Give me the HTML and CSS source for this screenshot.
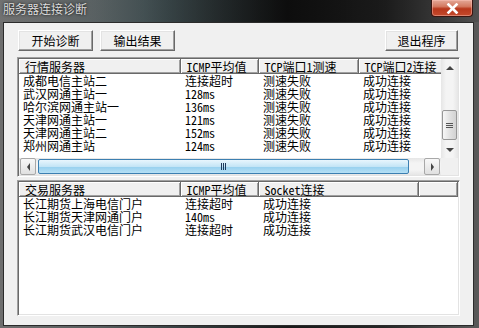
FILE: index.html
```html
<!DOCTYPE html>
<html lang="zh-CN">
<head>
  <meta charset="UTF-8">
  <title>服务器连接诊断</title>
  <link rel="stylesheet" href="styles.css">
</head>
<body>

  <div class="window">
    <div class="titlebar">
      <span class="title">服务器连接诊断</span>
      <span class="close">
        <svg width="13" height="11" viewBox="0 0 13 11"><path d="M2.5 1.5 L10.5 9.5 M10.5 1.5 L2.5 9.5" stroke="#fff" stroke-width="2.6" stroke-linecap="square"/></svg>
      </span>
    </div>

    <div class="client">
      <div class="toolbar">
        <button type="button" class="btn">开始诊断</button>
        <button type="button" class="btn">输出结果</button>
        <button type="button" class="btn btn-exit">退出程序</button>
      </div>

      <!-- quote servers -->
      <div class="listview lv-quote">
        <div class="lv-body">
          <table class="grid">
            <colgroup>
              <col style="width:161px"><col style="width:78px"><col style="width:100px"><col style="width:100px">
            </colgroup>
            <thead>
              <tr><th>行情服务器</th><th>ICMP平均值</th><th>TCP端口1测速</th><th>TCP端口2连接</th></tr>
            </thead>
            <tbody>
              <tr><td>成都电信主站二</td><td>连接超时</td><td>测速失败</td><td>成功连接</td></tr>
              <tr><td>武汉网通主站一</td><td>128ms</td><td>测速失败</td><td>成功连接</td></tr>
              <tr><td>哈尔滨网通主站一</td><td>136ms</td><td>测速失败</td><td>成功连接</td></tr>
              <tr><td>天津网通主站一</td><td>121ms</td><td>测速失败</td><td>成功连接</td></tr>
              <tr><td>天津网通主站二</td><td>152ms</td><td>测速失败</td><td>成功连接</td></tr>
              <tr><td>郑州网通主站</td><td>124ms</td><td>测速失败</td><td>成功连接</td></tr>
            </tbody>
          </table>
        </div>

        <div class="vscroll">
          <div class="sb-btn"><span class="arrow arrow-up"></span></div>
          <div class="sb-track">
            <div class="vthumb"><span class="grip-h"></span></div>
          </div>
          <div class="sb-btn"><span class="arrow arrow-down"></span></div>
        </div>

        <div class="hscroll">
          <div class="sb-btn sb-btn-box"><span class="arrow arrow-left"></span></div>
          <div class="sb-track">
            <div class="hthumb"><span class="grip-v"></span></div>
          </div>
          <div class="sb-btn sb-btn-box"><span class="arrow arrow-right"></span></div>
        </div>
        <div class="corner"></div>
      </div>

      <!-- trade servers -->
      <div class="listview lv-trade">
        <div class="lv-body">
          <table class="grid">
            <colgroup>
              <col style="width:161px"><col style="width:78px"><col style="width:160px"><col>
            </colgroup>
            <thead>
              <tr><th>交易服务器</th><th>ICMP平均值</th><th>Socket连接</th><th></th></tr>
            </thead>
            <tbody>
              <tr><td>长江期货上海电信门户</td><td>连接超时</td><td>成功连接</td><td></td></tr>
              <tr><td>长江期货天津网通门户</td><td>140ms</td><td>成功连接</td><td></td></tr>
              <tr><td>长江期货武汉电信门户</td><td>连接超时</td><td>成功连接</td><td></td></tr>
            </tbody>
          </table>
        </div>
      </div>
    </div>
  </div>

</body>
</html>
```

FILE: styles.css
```css
body {
  margin: 0;
  background: #fff;
  font-family: "Noto Sans Mono CJK SC", "Noto Sans CJK SC", sans-serif;
  font-size: 12px;
}
.window {
  width: 479px;
  height: 328px;
  box-sizing: border-box;
  padding: 0 5px 2px 3px;
  display: flex;
  flex-direction: column;
  background: linear-gradient(to right, #6e6e6e 0%, #5a5e5f 20%, #3c4446 35%, #1a1a1a 60%, #262626 80%, #5a5a5a 100%);
}
.titlebar {
  height: 22px;
  flex: none;
  display: flex;
  justify-content: space-between;
  align-items: flex-start;
  background: linear-gradient(to right, rgba(120,120,120,0.35), rgba(60,90,95,0.25) 30%, rgba(0,0,0,0.5) 60%, rgba(0,0,0,0.1));
  margin: 0 -5px 0 -3px;
}
.title {
  color: #dcdcdc;
  margin: 2px 0 0 3px;
  line-height: 14px;
  text-shadow: 0 0 3px #000;
}
.close {
  width: 42px;
  height: 17px;
  margin-right: 6px;
  box-sizing: border-box;
  display: flex;
  align-items: center;
  justify-content: center;
  border: 1px solid #3a1510;
  border-top: none;
  border-radius: 0 0 4px 4px;
  background: linear-gradient(#e4a898 0%, #d47a62 40%, #b8371c 55%, #c44a2c 100%);
  box-shadow: inset 0 0 0 1px rgba(255,200,190,0.45);
}
.client {
  flex: 1;
  border: 1px solid #2b2b2b;
  background: #f0f0f0;
  display: flex;
  flex-direction: column;
  padding: 7px 13px 9px 13px;
}
.toolbar {
  display: flex;
  gap: 7px;
  padding: 0 2px 0 1px;
  margin-bottom: 6px;
}
.btn {
  width: 75px;
  height: 21px;
  padding: 0;
  font: inherit;
  color: #000;
  background: #f0f0f0;
  border: 1px solid;
  border-color: #fff #696969 #696969 #fff;
  box-shadow: inset -1px -1px #a0a0a0, inset 1px 1px #e3e3e3;
}
.btn-exit {
  width: 73px;
  margin-left: auto;
}
.listview {
  border: 1px solid;
  border-color: #a0a0a0 #fff #fff #a0a0a0;
  box-shadow: inset 1px 1px #696969, inset -1px -1px #e3e3e3;
  padding: 1px;
  background: #fff;
  overflow: hidden;
}
.lv-quote {
  height: 120px;
  box-sizing: border-box;
  display: grid;
  grid-template-columns: 1fr 17px;
  grid-template-rows: 1fr 17px;
  margin-bottom: 3px;
}
.lv-trade {
  flex: 1;
}
.lv-body {
  overflow: hidden;
  background: #fff;
}
.lv-trade .lv-body {
  padding-bottom: 4px;
}
.grid {
  border-collapse: collapse;
  table-layout: fixed;
  width: 439px;
  line-height: 13px;
}
.lv-trade .grid {
  width: 100%;
}
.grid th {
  height: 14px;
  padding: 0 0 0 6px;
  font-weight: normal;
  text-align: left;
  white-space: nowrap;
  overflow: hidden;
  background: #f0f0f0;
  border-right: 1px solid #696969;
  border-bottom: 1px solid #696969;
  box-shadow: inset 1px 1px #fff, inset -1px -1px #a0a0a0;
}
.grid td {
  height: 13px;
  padding: 0 0 0 5px;
  white-space: nowrap;
}
.grid td:first-child {
  padding-left: 4px;
}
.vscroll, .hscroll {
  display: flex;
  background: linear-gradient(to right, #e6e6e6, #f4f4f4 30%, #f4f4f4 70%, #e6e6e6);
}
.vscroll {
  flex-direction: column;
}
.hscroll {
  background: linear-gradient(#e6e6e6, #f4f4f4 30%, #f4f4f4 70%, #e6e6e6);
}
.sb-btn {
  width: 17px;
  height: 17px;
  flex: none;
  display: flex;
  align-items: center;
  justify-content: center;
  box-sizing: border-box;
}
.sb-btn-box {
  width: 16px;
  border: 1px solid #a8a8a8;
  border-radius: 2px;
  background: linear-gradient(#f8f8f8, #e0e0e0);
  margin: 0 1px;
}
.sb-track {
  flex: 1;
  display: flex;
}
.vscroll .sb-track {
  flex-direction: column;
  padding: 34px 1px 1px;
}
.vthumb {
  height: 28px;
  border: 1px solid #979797;
  border-radius: 2px;
  background: linear-gradient(to right, #f7f7f7, #e2e2e2 50%, #d2d2d2);
  display: flex;
  align-items: center;
  justify-content: center;
}
.hscroll .sb-track {
  padding: 1px 14px 1px 1px;
}
.hthumb {
  flex: 1;
  border: 1px solid #3c7fb1;
  border-radius: 2px;
  background: linear-gradient(#e8f6fd, #c4e5f6 50%, #98d1ef 55%, #b6e0f5);
  display: flex;
  align-items: center;
  justify-content: center;
}
.grip-h {
  width: 7px;
  height: 5px;
  border-top: 1px solid #555;
  border-bottom: 1px solid #555;
  box-sizing: border-box;
  background: linear-gradient(transparent 1px, #555 1px, #555 2px, transparent 2px);
}
.grip-v {
  width: 5px;
  height: 7px;
  border-left: 1px solid #1e395b;
  border-right: 1px solid #1e395b;
  box-sizing: border-box;
  background: linear-gradient(to right, transparent 1px, #1e395b 1px, #1e395b 2px, transparent 2px);
}
.arrow {
  width: 0;
  height: 0;
  border: 4px solid transparent;
}
.arrow-up {
  border-bottom-color: #444;
  border-top-width: 0;
}
.arrow-down {
  border-top-color: #444;
  border-bottom-width: 0;
}
.arrow-left {
  border-right-color: #444;
  border-width: 4px 3px 4px 0;
}
.arrow-right {
  border-left-color: #444;
  border-width: 4px 0 4px 3px;
}
.corner {
  background: #f0f0f0;
}
```
